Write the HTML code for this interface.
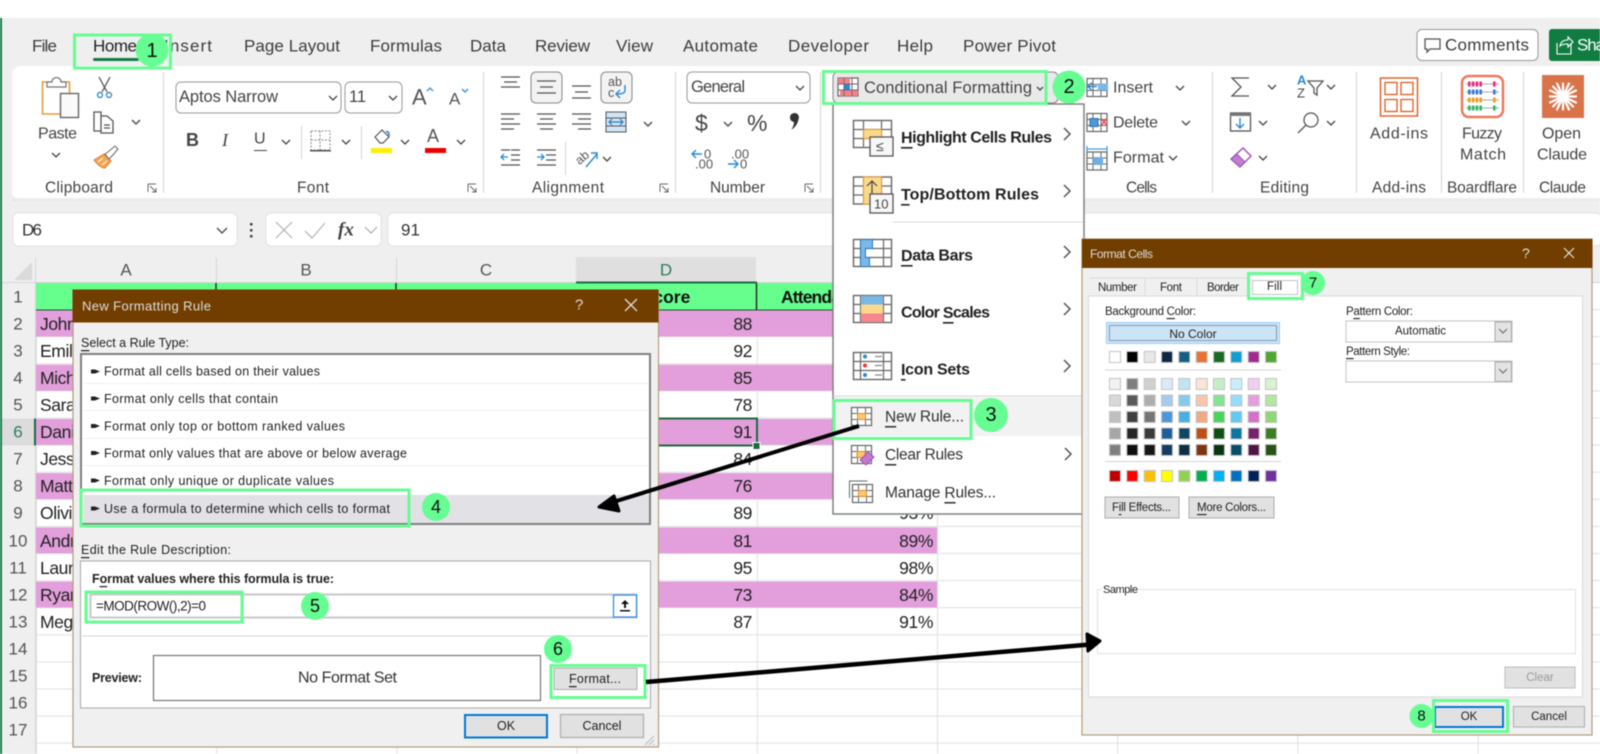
<!DOCTYPE html>
<html lang="en"><head><meta charset="utf-8"><title>Excel conditional formatting steps</title>
<style>
html,body{margin:0;padding:0;background:#fff;width:1600px;height:754px;overflow:hidden}
svg{display:block;filter:blur(.45px)}
text{font-family:"Liberation Sans",sans-serif;dominant-baseline:central;fill:#333;font-size:15px}
.tab{font-size:17px;fill:#3c3c3c}
.rb{font-size:16px;fill:#444}
.lb{font-size:15.5px;fill:#444}
.cell{font-size:17.5px;fill:#222;letter-spacing:-.4px}
.hd{font-size:17px;fill:#555;text-anchor:middle}
.dl{font-size:12.5px;fill:#222}
.dt{font-size:13px;fill:#ddd}
.mb{font-size:16px;font-weight:bold;fill:#222}
.mn{font-size:15.5px;fill:#333}
.num{font-size:20px;fill:#111;text-anchor:middle}
.u{text-decoration:underline}
.ic{fill:none;stroke:#555;stroke-width:1.3}
.chev{fill:none;stroke:#444;stroke-width:1.3}
.g{fill:none;stroke:#66fd92;stroke-width:3}
.c{fill:#66fd92}
</style></head><body>
<svg xmlns="http://www.w3.org/2000/svg" width="1600" height="754" viewBox="0 0 1600 754">
<defs>
<pattern id="grid" patternUnits="userSpaceOnUse" x="36" y="283" width="180.2" height="27.1"><rect width="181" height="28" fill="#fff"/><path d="M.5 0V28M0 26.6H181" stroke="#e0e0e0" stroke-width="1" fill="none"/></pattern>
<path id="cv" d="M-4 -2L0 2L4 -2" class="chev"/>
<path id="mc" d="M-3 -6L3 0L-3 6" fill="none" stroke="#555" stroke-width="1.5"/>
<g id="mg"><rect x="0" y="0" width="38" height="27" fill="#fff" stroke="#666" stroke-width="1.4"/><path d="M0 9H38M0 18H38M10 0V27M28 0V27" stroke="#666" stroke-width="1.2" fill="none"/></g>
<g id="mg2"><rect x="0" y="0" width="38" height="27" fill="#fff" stroke="#666" stroke-width="1.4"/><path d="M0 9H38M0 18H38M7 0V27M30 0V27" stroke="#666" stroke-width="1.2" fill="none"/></g>
<g id="sg"><rect x="0" y="0" width="20" height="18" fill="#fff" stroke="#666" stroke-width="1.2"/><path d="M0 6H20M0 12H20M6 0V18M14 0V18" stroke="#666" stroke-width="1" fill="none"/></g>
</defs>

<rect width="1600" height="754" fill="#efefef"/>
<rect width="1600" height="18" fill="#fff"/>
<rect x="0" y="18" width="2" height="736" fill="#107c41"/>

<!-- tabs -->
<text class="tab" x="32" y="46" textLength="25">File</text>
<text class="tab" x="93" y="46" textLength="44" style="fill:#222">Home</text>
<rect x="93" y="58" width="46" height="3" rx="1.5" fill="#107c41"/>
<text class="tab" x="164" y="46" textLength="48">Insert</text>
<text class="tab" x="244" y="46" textLength="96">Page Layout</text>
<text class="tab" x="370" y="46" textLength="72">Formulas</text>
<text class="tab" x="470" y="46" textLength="36">Data</text>
<text class="tab" x="535" y="46" textLength="55">Review</text>
<text class="tab" x="616" y="46" textLength="37">View</text>
<text class="tab" x="683" y="46" textLength="75">Automate</text>
<text class="tab" x="788" y="46" textLength="81">Developer</text>
<text class="tab" x="897" y="46" textLength="36">Help</text>
<text class="tab" x="963" y="46" textLength="93">Power Pivot</text>
<rect x="1417" y="29.5" width="121" height="31" rx="5" fill="#fff" stroke="#999"/>
<path d="M1425 39h15v10h-10l-3 3v-3h-2z" class="ic"/>
<text class="tab" x="1445" y="45" textLength="84">Comments</text>
<rect x="1549" y="29" width="60" height="32" rx="3" fill="#107c41"/>
<path d="M1557 43v11h14v-11M1560 46c1-5 4-6 8-6v-3l5 5-5 5v-3c-3 0-6 0-8 2z" fill="none" stroke="#fff" stroke-width="1.1"/>
<text class="tab" x="1577" y="45" textLength="28" style="fill:#fff">Sha</text>

<!-- ribbon -->
<rect x="12" y="66" width="1600" height="134" rx="9" fill="#fff"/>
<rect x="12" y="198" width="1588" height="3" fill="#e3e3e3" opacity=".6"/>
<g fill="#d4d4d4">
<rect x="163" y="72" width="1" height="121"/><rect x="483" y="72" width="1" height="121"/><rect x="675" y="72" width="1" height="121"/><rect x="820" y="72" width="1" height="121"/><rect x="1212" y="72" width="1" height="121"/><rect x="1356" y="72" width="1" height="121"/><rect x="1441" y="72" width="1" height="121"/><rect x="1523" y="72" width="1" height="121"/>
</g>
<!-- clipboard -->
<g transform="translate(0,-2)">
<path d="M42.5 84h27v32h-27z" fill="#fff" stroke="#e89a3c" stroke-width="1.6"/>
<path d="M47 84h5c0-6 9-6 9 0h5v5h-19z" fill="#fff" stroke="#777" stroke-width="1.2"/>
<rect x="60.5" y="95.5" width="18" height="24" fill="#fafafa" stroke="#666" stroke-width="1.4"/>
</g>
<text class="rb" x="38" y="134" textLength="39">Paste</text>
<use href="#cv" x="56" y="155"/>
<path d="M99 77l8 15M110 77l-8 15" class="ic"/><circle cx="100" cy="95" r="2.5" fill="none" stroke="#3b8dd0" stroke-width="1.4"/><circle cx="109" cy="95" r="2.5" fill="none" stroke="#3b8dd0" stroke-width="1.4"/>
<g transform="translate(0,-2)"><path d="M94 114h7v19h-7zM101 118h6l6 5v12h-12z" class="ic" fill="#fff"/><path d="M104 127h6M104 130h6" class="ic" stroke-width="1"/></g>
<use href="#cv" x="136" y="122"/>
<path d="M94 160l10-6 7 7-6 7c-4 0-8-4-11-8z" fill="#f3a858" stroke="#e07a20"/><path d="M98 162l5-4M102 165l5-4" stroke="#fff"/>
<path d="M105 154l3-2 7-6 3 3-6 7-3 3z" fill="#fff" stroke="#666"/>
<text class="lb" x="45" y="188" textLength="68">Clipboard</text>
<path d="M148 184v8M148 184h8M150 186l6 6M156 188v4h-4" fill="none" stroke="#666"/>
<!-- font -->
<rect x="176" y="82" width="165" height="31" rx="5" fill="#fff" stroke="#999"/>
<text x="179" y="97" textLength="99" style="font-size:16.5px;fill:#444">Aptos Narrow</text><use href="#cv" x="333" y="98"/>
<rect x="345" y="82" width="57" height="31" rx="5" fill="#fff" stroke="#999"/>
<text x="349" y="97" textLength="17" style="font-size:16.5px;fill:#444">11</text><use href="#cv" x="393" y="98"/>
<text x="412" y="97" style="font-size:22px;fill:#555">A</text><path d="M427 91l3-3 3 3" fill="none" stroke="#3b8dd0" stroke-width="1.3"/>
<text x="449" y="99" style="font-size:17px;fill:#555">A</text><path d="M462 89l3 3 3-3" fill="none" stroke="#3b8dd0" stroke-width="1.3"/>
<text x="186" y="140" style="font-size:18px;font-weight:bold;fill:#444">B</text>
<text x="222" y="140" style="font-size:18px;font-style:italic;font-family:'Liberation Serif',serif;fill:#444">I</text>
<text x="254" y="139" style="font-size:16px;fill:#444">U</text><rect x="254" y="150" width="13" height="1" fill="#444"/>
<use href="#cv" x="286" y="142"/><rect x="301" y="126" width="1" height="33" fill="#d4d4d4"/>
<g transform="translate(0,-1)"><path d="M311 132h19v19h-19z M320 132v19M311 141h19" fill="none" stroke="#888" stroke-dasharray="2 1.5"/><rect x="310" y="151" width="21" height="1.5" fill="#555"/></g>
<use href="#cv" x="346" y="142"/><rect x="361" y="126" width="1" height="33" fill="#d4d4d4"/>
<g transform="translate(0,-2)"><path d="M375 139l7-7 7 7-6 6h-3z" fill="#fff" stroke="#555" stroke-width="1.2"/><path d="M386 134c2-1 3 0 3 4" fill="none" stroke="#2a7ac0" stroke-width="1.5"/></g>
<rect x="371" y="148" width="21" height="5" fill="#ffee00"/>
<use href="#cv" x="405" y="142"/>
<text x="427" y="136" style="font-size:18px;fill:#555">A</text><rect x="425" y="148" width="21" height="5" fill="#ee0000"/>
<use href="#cv" x="461" y="142"/>
<text class="lb" x="297" y="188" textLength="32">Font</text>
<path d="M468 184v8M468 184h8M470 186l6 6M476 188v4h-4" fill="none" stroke="#666"/>
<!-- alignment -->
<path d="M501 77h19M504 82h13M501 87h19" class="ic"/>
<rect x="531" y="72" width="31" height="31" rx="5" fill="#f3f3f3" stroke="#888"/>
<path d="M537 81h19M540 87h13M537 93h19" class="ic"/>
<path d="M572 86h19M575 92h13M572 98h19" class="ic"/>
<rect x="601" y="72" width="31" height="31" rx="5" fill="#f3f3f3" stroke="#888"/>
<text x="608" y="82" style="font-size:12.5px;fill:#555">ab</text><text x="608" y="93" style="font-size:12.5px;fill:#555">c</text>
<path d="M625 85v5c0 3-2 4-9 4M620 90l-4 4 4 4" fill="none" stroke="#2a8ad0" stroke-width="1.4"/>
<path d="M501 114h19M501 119h13M501 124h19M501 129h13" class="ic"/>
<path d="M537 114h19M540 119h13M537 124h19M540 129h13" class="ic"/>
<path d="M572 114h19M578 119h13M572 124h19M578 129h13" class="ic"/>
<rect x="606" y="112" width="20" height="20" fill="#cfe5f7" stroke="#555"/><path d="M606 118h20M606 126h20" stroke="#555"/><path d="M609 122h14M612 119l-3 3 3 3M620 119l3 3-3 3" fill="none" stroke="#2a7ac0" stroke-width="1.2"/>
<use href="#cv" x="648" y="124"/>
<path d="M511 150h9M511 155h9M511 160h9M501 150h9M501 165h19" class="ic"/><path d="M508 157h-7M504 154l-3 3 3 3" fill="none" stroke="#2a8ad0" stroke-width="1.3"/>
<path d="M537 150h19M546 155h10M546 160h10M537 165h19" class="ic"/><path d="M537 157h7M541 154l3 3-3 3" fill="none" stroke="#2a8ad0" stroke-width="1.3"/>
<rect x="565" y="142" width="1" height="33" fill="#d4d4d4"/>
<text x="575" y="157" transform="rotate(-40 583 157)" style="font-size:12.5px;fill:#555">ab</text><path d="M586 167l11-13M591 153h6v6" fill="none" stroke="#2a8ad0" stroke-width="1.4"/>
<use href="#cv" x="607" y="159"/>
<text class="lb" x="532" y="188" textLength="72">Alignment</text>
<path d="M660 184v8M660 184h8M662 186l6 6M668 188v4h-4" fill="none" stroke="#666"/>
<!-- number -->
<rect x="687" y="72" width="123" height="31" rx="5" fill="#fff" stroke="#999"/>
<text x="691" y="87" textLength="54" style="font-size:16.5px;fill:#444">General</text><use href="#cv" x="800" y="88"/>
<text x="695" y="123" style="font-size:23px;fill:#444">$</text><use href="#cv" x="728" y="124"/>
<text x="747" y="123" style="font-size:23px;fill:#444">%</text>
<path d="M790 117a4.5 4.5 0 1 1 8.500 2.500c-1 4-3 8-7 10c1.500-2.500 2.500-5 2.500-7.500a4.500 4.500 0 0 1-4-5z" fill="#333"/>
<path d="M702 154h-10M696 150l-4 4 4 4" fill="none" stroke="#2a8ad0" stroke-width="1.4"/><text x="704" y="154" style="font-size:13px;fill:#555">0</text><text x="695" y="164" style="font-size:13px;fill:#555">.00</text>
<text x="731" y="154" style="font-size:13px;fill:#555">.00</text><path d="M728 164h10M734 160l4 4-4 4" fill="none" stroke="#2a8ad0" stroke-width="1.4"/><text x="740" y="164" style="font-size:13px;fill:#555">0</text>
<text class="lb" x="710" y="188" textLength="55">Number</text>
<path d="M805 184v8M805 184h8M807 186l6 6M813 188v4h-4" fill="none" stroke="#666"/>
<!-- conditional button -->
<rect x="833" y="72" width="225" height="31" rx="5" fill="#e9e9e9" stroke="#888"/>
<use href="#sg" x="838" y="78"/>
<path d="M838 78h12v6h-12zM840 90h18v6h-18z" fill="#f4808c"/><rect x="844" y="84" width="6" height="6" fill="#2a8ad0"/>
<path d="M838 84h20M838 90h20M844 78v18M852 78v18" stroke="#666" stroke-width=".8"/>
<text x="864" y="88" textLength="168" style="font-size:16.5px;fill:#444">Conditional Formatting</text>
<path d="M1037 87l3 3 3-3" class="chev"/>
<!-- cells -->
<g transform="translate(0,-2.5)"><use href="#sg" x="1087" y="81"/><rect x="1098" y="86" width="10" height="7" fill="#7ab8e8"/><path d="M1097 89h-9M1092 85l-4 4 4 4" fill="none" stroke="#2a8ad0" stroke-width="1.4"/></g>
<text class="rb" x="1113" y="88" textLength="40">Insert</text><use href="#cv" x="1180" y="88"/>
<g transform="translate(0,-4.5)"><use href="#sg" x="1087" y="118"/><rect x="1090" y="123" width="8" height="8" fill="#4f98d8" stroke="#2a70b0"/><path d="M1101 123l6 7M1107 123l-6 7" stroke="#e84848" stroke-width="1.4"/></g>
<text class="rb" x="1113" y="123" textLength="45">Delete</text><use href="#cv" x="1186" y="123"/>
<g transform="translate(0,-3)"><use href="#sg" x="1087" y="155"/><rect x="1093" y="160" width="10" height="8" fill="#6fb0e4"/><path d="M1087 152h20M1087 149v6M1107 149v6" stroke="#2a8ad0" fill="none"/></g>
<text class="rb" x="1113" y="158" textLength="51">Format</text><use href="#cv" x="1173" y="158"/>
<text class="lb" x="1126" y="188" textLength="31">Cells</text>
<!-- editing -->
<path d="M1249 78h-17l9 9-9 9h17" class="ic" stroke-width="1.5"/><use href="#cv" x="1272" y="87"/>
<text x="1297" y="80" style="font-size:13px;font-weight:bold;fill:#2a8ad0">A</text><text x="1297" y="93" style="font-size:13px;fill:#444">Z</text>
<path d="M1308 81h15l-6 7v7l-3-2v-5z" class="ic"/><use href="#cv" x="1331" y="87"/>
<g transform="translate(0,-4)"><rect x="1230.5" y="117" width="20" height="18" fill="#fff" stroke="#555" stroke-width="1.3"/><rect x="1230" y="117" width="21" height="3" fill="#777"/>
<path d="M1240 122v10M1236 128l4 4 4-4" fill="none" stroke="#2a8ad0" stroke-width="1.4"/></g><use href="#cv" x="1263" y="123"/>
<circle cx="1311" cy="120" r="7" class="ic" stroke-width="1.4"/><path d="M1306 125l-8 8" class="ic" stroke-width="1.5"/><use href="#cv" x="1331" y="123"/>
<g transform="translate(0,-4)"><path d="M1231 163l12-11 8 8-11 11z" fill="#fff" stroke="#a04fb8" stroke-width="1.4"/><path d="M1231 163l6-5 8 8-5 5z" fill="#c080d0" stroke="#a04fb8"/></g>
<use href="#cv" x="1263" y="158"/>
<text class="lb" x="1260" y="188" textLength="49">Editing</text>
<!-- addins -->
<g transform="translate(0,-2.5)"><rect x="1380.5" y="80.5" width="37" height="38" fill="none" stroke="#e05a20" stroke-width="1.4"/>
<g fill="none" stroke="#e05a20" stroke-width="1.3"><rect x="1385" y="85" width="12" height="12"/><rect x="1401" y="85" width="12" height="12"/><rect x="1385" y="102" width="12" height="12"/><rect x="1401" y="102" width="12" height="12"/></g></g>
<text class="rb" x="1370" y="134" textLength="58">Add-ins</text>
<text class="lb" x="1372" y="188" textLength="54">Add-ins</text>
<g transform="translate(0,-3)"><rect x="1462" y="79" width="41" height="41" rx="7" fill="#fff" stroke="#f0785a" stroke-width="2.5"/>
<g stroke="#aaa"><path d="M1466 87h33M1466 95h33M1466 103h33M1466 111h33"/></g>
<g stroke-width="5" stroke-dasharray="2.6 1.2"><path d="M1468 87h15M1493 87h4" stroke="#e82a7a"/><path d="M1468 95h15M1493 95h4" stroke="#3a78d8"/><path d="M1468 103h15M1493 103h4" stroke="#f0a020"/><path d="M1468 111h15M1493 111h4" stroke="#30b868"/></g></g>
<text class="rb" x="1462" y="134" textLength="40">Fuzzy</text><text class="rb" x="1460" y="155" textLength="46">Match</text>
<text class="lb" x="1447" y="188" textLength="70">Boardflare</text>
<rect x="1542" y="75" width="42" height="43" fill="#d9734a"/>
<g transform="translate(0,-3.5)"><g stroke="#fff" stroke-width="2.2" stroke-linecap="round"><path d="M1563 87v26M1550 100h26M1553 90l20 20M1573 90l-20 20M1557 87l12 26M1569 87l-12 26M1550 94l26 12M1576 94l-26 12"/></g>
<circle cx="1563" cy="100" r="3" fill="#fff"/></g>
<text class="rb" x="1542" y="134" textLength="39">Open</text><text class="rb" x="1537" y="155" textLength="50">Claude</text>
<text class="lb" x="1539" y="188" textLength="47">Claude</text>

<!-- formula bar -->
<rect x="13" y="213" width="224" height="33" rx="5" fill="#fff" stroke="#e3e3e3"/>
<text x="22" y="230" textLength="20" style="font-size:17px;fill:#333">D6</text>
<path d="M217 228l5 5 5-5" class="chev" stroke-width="1.6"/>
<g fill="#444"><rect x="250" y="223" width="2.5" height="2.5"/><rect x="250" y="229" width="2.5" height="2.5"/><rect x="250" y="235" width="2.5" height="2.5"/></g>
<rect x="266" y="213" width="115" height="33" rx="5" fill="#fff" stroke="#e3e3e3"/>
<path d="M276 222l16 16M292 222l-16 16M305 231l7 7 13-15" fill="none" stroke="#bbb" stroke-width="1.3"/>
<text x="338" y="230" style="font-size:19px;font-style:italic;font-weight:bold;font-family:'Liberation Serif',serif;fill:#444">fx</text>
<path d="M365 227l6 6 6-6" fill="none" stroke="#aaa" stroke-width="1.2"/>
<rect x="388" y="213" width="1213" height="33" rx="5" fill="#fff" stroke="#e3e3e3"/>
<text x="401" y="230" textLength="19" style="font-size:17px;fill:#333">91</text>

<!-- sheet -->
<rect x="0" y="250" width="1600" height="504" fill="#efefef"/>
<rect x="0" y="18" width="2" height="736" fill="#107c41"/>
<rect x="36" y="283" width="1564" height="471" fill="url(#grid)"/>
<path d="M32 262v18h-18z" fill="#dadada"/>
<rect x="576" y="257" width="180" height="26" fill="#dfdfdf"/>
<g fill="#d5d5d5"><rect x="216" y="258" width="1" height="25"/><rect x="396" y="258" width="1" height="25"/><rect x="936" y="258" width="1" height="25"/><rect x="1116" y="258" width="1" height="25"/><rect x="2" y="282" width="1598" height="1"/><rect x="35" y="258" width="1" height="496"/></g>
<text class="hd" x="126" y="270">A</text><text class="hd" x="306" y="270">B</text><text class="hd" x="486" y="270">C</text><text class="hd" x="666" y="270" style="fill:#2f7c5c">D</text><text class="hd" x="846" y="270">E</text>
<!-- header row -->
<rect x="36" y="283" width="901" height="27" fill="#66ff8e"/>
<rect x="36" y="309.5" width="901" height="1.2" fill="#2a4a30"/>
<path d="M216 283v27M396 283v27M756.5 283v27M937 283v27" stroke="#222" stroke-width="1.4"/>
<rect x="576" y="281.500" width="181" height="2" fill="#1c6b40"/>
<text x="666" y="297" style="font-size:17.5px;font-weight:bold;fill:#111;text-anchor:middle">Score</text>
<text x="781" y="297" textLength="126" style="font-size:17.5px;font-weight:bold;fill:#111">Attendance Rate</text>
<!-- pink -->
<g fill="#e29fdb">
<rect x="36" y="310.5" width="901" height="26"/><rect x="36" y="364.7" width="901" height="26"/><rect x="36" y="418.9" width="901" height="26"/><rect x="36" y="473.1" width="901" height="26"/><rect x="36" y="527.3" width="901" height="26"/><rect x="36" y="581.5" width="901" height="26"/>
</g>
<!-- row headers -->
<rect x="2" y="418.5" width="33" height="27" fill="#dcdcdc"/>
<rect x="34" y="418.5" width="2" height="27" fill="#1c6b40"/>
<text class="hd" x="18" y="297">1</text><text class="hd" x="18" y="324">2</text><text class="hd" x="18" y="351">3</text><text class="hd" x="18" y="378">4</text><text class="hd" x="18" y="405">5</text><text class="hd" x="18" y="432" style="fill:#2f7c5c">6</text><text class="hd" x="18" y="459">7</text><text class="hd" x="18" y="486">8</text><text class="hd" x="18" y="513">9</text><text class="hd" x="18" y="541">10</text><text class="hd" x="18" y="568">11</text><text class="hd" x="18" y="595">12</text><text class="hd" x="18" y="622">13</text><text class="hd" x="18" y="649">14</text><text class="hd" x="18" y="676">15</text><text class="hd" x="18" y="703">16</text><text class="hd" x="18" y="730">17</text>
<!-- names -->
<text class="cell" x="40" y="324">John Smith</text><text class="cell" x="40" y="351">Emily Davis</text><text class="cell" x="40" y="378">Michael Brown</text><text class="cell" x="40" y="405">Sarah Wilson</text><text class="cell" x="40" y="432">Daniel Lee</text><text class="cell" x="40" y="459">Jessica Taylor</text><text class="cell" x="40" y="486">Matthew Clark</text><text class="cell" x="40" y="513">Olivia Harris</text><text class="cell" x="40" y="541">Andrew Lewis</text><text class="cell" x="40" y="568">Lauren Walker</text><text class="cell" x="40" y="595">Ryan Hall</text><text class="cell" x="40" y="622">Megan Young</text>
<!-- values -->
<text class="cell" x="752" y="324" text-anchor="end">88</text><text class="cell" x="752" y="351" text-anchor="end">92</text><text class="cell" x="752" y="378" text-anchor="end">85</text><text class="cell" x="752" y="405" text-anchor="end">78</text><text class="cell" x="752" y="432" text-anchor="end">91</text><text class="cell" x="752" y="459" text-anchor="end">84</text><text class="cell" x="752" y="486" text-anchor="end">76</text><text class="cell" x="752" y="513" text-anchor="end">89</text><text class="cell" x="752" y="541" text-anchor="end">81</text><text class="cell" x="752" y="568" text-anchor="end">95</text><text class="cell" x="752" y="595" text-anchor="end">73</text><text class="cell" x="752" y="622" text-anchor="end">87</text>
<text class="cell" x="933" y="324" text-anchor="end">95%</text><text class="cell" x="933" y="351" text-anchor="end">97%</text><text class="cell" x="933" y="378" text-anchor="end">90%</text><text class="cell" x="933" y="405" text-anchor="end">88%</text><text class="cell" x="933" y="432" text-anchor="end">96%</text><text class="cell" x="933" y="459" text-anchor="end">92%</text><text class="cell" x="933" y="486" text-anchor="end">85%</text><text class="cell" x="933" y="513" text-anchor="end">93%</text><text class="cell" x="933" y="541" text-anchor="end">89%</text><text class="cell" x="933" y="568" text-anchor="end">98%</text><text class="cell" x="933" y="595" text-anchor="end">84%</text><text class="cell" x="933" y="622" text-anchor="end">91%</text>
<rect x="576" y="418.5" width="181" height="27" fill="none" stroke="#1c6b40" stroke-width="2"/>
<rect x="753" y="442.5" width="7" height="7" fill="#1c6b40" stroke="#fff"/>

<!-- dialog 1 -->
<rect x="73" y="290" width="585.5" height="457" fill="#f0f0f0" stroke="#b39a7c" stroke-width="1.2"/>
<rect x="72.5" y="289.5" width="586" height="33" fill="#723e00"/>
<text class="dt" x="82" y="306" textLength="129">New Formatting Rule</text>
<text x="575" y="305" style="font-size:15px;fill:#ddd">?</text>
<path d="M625 299l12 12M637 299l-12 12" stroke="#ddd" stroke-width="1.3"/>
<text class="dl" x="81" y="343" textLength="108"><tspan class="u">S</tspan>elect a Rule Type:</text>
<rect x="81" y="354" width="569" height="170" fill="#fff" stroke="#808080" stroke-width="2"/>
<path d="M83 383.5H648M83 410.5H648M83 438.5H648M83 465.5H648" stroke="#f0f0f0"/>
<rect x="83" y="495" width="566" height="28" fill="#e1e1e6"/>
<g fill="#222"><path d="M91 369.5h4l5 2-5 2h-4zM91 396.5h4l5 2-5 2h-4zM91 424h4l5 2-5 2h-4zM91 451h4l5 2-5 2h-4zM91 478.5h4l5 2-5 2h-4zM91 506.5h4l5 2-5 2h-4z"/></g>
<text class="dl" x="104" y="371.5" textLength="216">Format all cells based on their values</text>
<text class="dl" x="104" y="399" textLength="174">Format only cells that contain</text>
<text class="dl" x="104" y="426.3" textLength="241">Format only top or bottom ranked values</text>
<text class="dl" x="104" y="453.7" textLength="303">Format only values that are above or below average</text>
<text class="dl" x="104" y="481" textLength="230">Format only unique or duplicate values</text>
<text class="dl" x="104" y="509" textLength="286">Use a formula to determine which cells to format</text>
<text class="dl" x="81" y="550" textLength="150"><tspan class="u">E</tspan>dit the Rule Description:</text>
<rect x="80.5" y="561" width="570" height="147" fill="#fff" stroke="#a8a8a8"/>
<text class="dl" x="92" y="579" textLength="242" style="font-weight:bold">F<tspan class="u">o</tspan>rmat values where this formula is true:</text>
<rect x="90.5" y="594.5" width="546" height="23" fill="#fff" stroke="#c8c8c8" stroke-width="2"/>
<text x="96" y="606" textLength="110" style="font-size:13.5px;fill:#222">=MOD(ROW(),2)=0</text>
<rect x="613.5" y="595" width="23" height="22" fill="#fff" stroke="#3a8ee0" stroke-width="1.3"/>
<path d="M625 600l-4 4h3v4h2v-4h3zM620 610h10v1.5h-10z" fill="#111"/>
<path d="M82 636H648" stroke="#d4d4d4"/>
<text class="dl" x="92" y="678" textLength="50" style="font-weight:bold">Preview:</text>
<rect x="153.5" y="655.5" width="387" height="45" fill="#fff" stroke="#777" stroke-width="1.2"/>
<text x="298" y="678" textLength="99" style="font-size:16px;fill:#333">No Format Set</text>
<rect x="554" y="668" width="83" height="21.5" fill="#e1e1e1" stroke="#adadad"/>
<text class="dl" x="569" y="679" textLength="52"><tspan class="u">F</tspan>ormat...</text>
<rect x="465" y="715" width="82" height="22.5" fill="#e1e1e1" stroke="#0078d7" stroke-width="2"/>
<text class="dl" x="506" y="726" style="text-anchor:middle">OK</text>
<rect x="560.5" y="714.5" width="83" height="23" fill="#e1e1e1" stroke="#adadad" stroke-width="1.2"/>
<text class="dl" x="602" y="726" style="text-anchor:middle">Cancel</text>
<path d="M654 736l-9 9M654 740l-5 5M654 744l-1 1" stroke="#bbb"/>
<!-- dialog1 annotations -->
<rect class="g" x="81" y="490" width="328" height="36"/>
<circle class="c" cx="436" cy="507" r="14"/><text class="num" x="436" y="507" style="font-size:18px">4</text>
<rect class="g" x="86" y="592" width="156" height="30"/>
<circle class="c" cx="315" cy="606" r="14"/><text class="num" x="315" y="606" style="font-size:18px">5</text>
<rect class="g" x="551" y="665.5" width="94" height="32"/>
<circle class="c" cx="558" cy="649" r="14"/><text class="num" x="558" y="649" style="font-size:18px">6</text>

<!-- menu -->
<rect x="833" y="104" width="251" height="410" fill="#fff" stroke="#808080" stroke-width="1.5"/>
<use href="#mg" x="853.5" y="120.5"/><rect x="863.5" y="129.500" width="18" height="9" fill="#fbd98c" stroke="#e8962c"/>
<rect x="870" y="137" width="23" height="19" fill="#f7f7f7" stroke="#555" stroke-width="1.3"/><text x="876" y="146" style="font-size:14px;fill:#444">≤</text>
<text class="mb" x="901" y="138" textLength="151"><tspan class="u">H</tspan>ighlight Cells Rules</text>
<use href="#mc" x="1067" y="134"/>
<use href="#mg" x="853.5" y="177"/><rect x="863.5" y="177" width="18" height="27" fill="#fbd98c" stroke="#e8962c"/>
<path d="M872 198v-17M867 186l5-5 5 5" fill="none" stroke="#444" stroke-width="1.2"/>
<rect x="870" y="194" width="23" height="19" fill="#f7f7f7" stroke="#555" stroke-width="1.3"/><text x="874" y="204" style="font-size:13px;fill:#444">10</text>
<text class="mb" x="901" y="195" textLength="138"><tspan class="u">T</tspan>op/Bottom Rules</text>
<use href="#mc" x="1067" y="191"/>
<path d="M893 222H1083" stroke="#d9d9d9"/>
<use href="#mg2" x="853.5" y="239.5"/><path d="M860.5 239.5h12v9h-7v9h4v9h-9z" fill="#7ab8e8" stroke="#2a7ac0"/>
<text class="mb" x="901" y="256" textLength="72"><tspan class="u">D</tspan>ata Bars</text>
<use href="#mc" x="1067" y="252"/>
<use href="#mg2" x="853.5" y="295.500"/><rect x="860.5" y="295.5" width="23" height="9" fill="#7ab8e8"/><rect x="860.5" y="304.5" width="23" height="9" fill="#fbd98c"/><rect x="860.5" y="313.5" width="23" height="9" fill="#f7878f"/>
<path d="M860.5 295.5h23v27h-23z" fill="none" stroke="#777"/>
<text class="mb" x="901" y="313" textLength="89">Color <tspan class="u">S</tspan>cales</text>
<use href="#mc" x="1067" y="309"/>
<use href="#mg2" x="853.5" y="352.5"/><circle cx="865" cy="356.500" r="2" fill="#2a8ad0"/><circle cx="865" cy="365.500" r="2" fill="#ee3838"/><circle cx="865" cy="375" r="2" fill="#2a8ad0"/>
<path d="M875 356.5h7M875 365.5h7M875 375h7" stroke="#888" stroke-width="1.2"/>
<text class="mb" x="901" y="370" textLength="69"><tspan class="u">I</tspan>con Sets</text>
<use href="#mc" x="1067" y="366"/>
<path d="M833 396H1083" stroke="#d4d4d4"/>
<rect x="834" y="397" width="248" height="39" fill="#f2f2f2"/>
<use href="#sg" x="851.5" y="407.5"/><rect x="857.5" y="413.5" width="8" height="6" fill="#fbc970" stroke="#e8862c"/>
<text class="mn" x="885" y="417" textLength="79"><tspan class="u">N</tspan>ew Rule...</text>
<use href="#sg" x="851.5" y="445.5"/><rect x="857" y="451.5" width="8" height="6" fill="#fbc970" stroke="#e8862c"/>
<path d="M860 460l8-8 6 5-8 8z" fill="#c078d0" stroke="#a04fb8"/>
<text class="mn" x="885" y="455" textLength="78"><tspan class="u">C</tspan>lear Rules</text>
<use href="#mc" x="1068" y="454"/>
<use href="#sg" x="852.5" y="484.5"/><path d="M849.500 498v-17h18" fill="none" stroke="#666"/><rect x="858.5" y="490.5" width="8" height="6" fill="#fbc970" stroke="#e8862c"/>
<text class="mn" x="885" y="493" textLength="111">Manage <tspan class="u">R</tspan>ules...</text>

<!-- dialog 2 -->
<rect x="1082" y="239" width="510" height="496" fill="#f0f0f0" stroke="#b39a7c" stroke-width="1.2"/>
<rect x="1082" y="239" width="510.5" height="29" fill="#723e00"/>
<text class="dt" x="1090" y="254" textLength="63" style="font-size:12px">Format Cells</text>
<text x="1522" y="253" style="font-size:14px;fill:#ddd">?</text>
<path d="M1564 248l10 10M1574 248l-10 10" stroke="#ddd" stroke-width="1.2"/>
<rect x="1088.5" y="296" width="494" height="401" fill="#fff" stroke="#d9d9d9"/>
<path d="M1090 278h55v18M1145 278h52v18M1197 278h53v18" fill="none" stroke="#dcdcdc"/>
<rect x="1250" y="276" width="50" height="21" fill="#fff"/>
<rect x="1252.5" y="280.5" width="45" height="14" fill="none" stroke="#888" stroke-dasharray="1 1"/>
<text class="dl" x="1098" y="288" textLength="39" style="font-size:11.5px">Number</text>
<text class="dl" x="1160" y="288" textLength="22" style="font-size:11.5px">Font</text>
<text class="dl" x="1207" y="288" textLength="32" style="font-size:11.5px">Border</text>
<text class="dl" x="1267" y="287" textLength="15" style="font-size:11.5px">Fill</text>
<text class="dl" x="1105" y="312" textLength="91" style="font-size:11.5px">Background <tspan class="u">C</tspan>olor:</text>
<rect x="1106.5" y="322.5" width="173" height="21" fill="#cce4f7" stroke="#99d1ff"/>
<rect x="1109.5" y="325.5" width="167" height="15" fill="none" stroke="#8a9aa8"/>
<text class="dl" x="1193" y="334" style="text-anchor:middle;font-size:12px">No Color</text>
<g stroke="#c4c4c4" stroke-width="1">
<rect x="1109.5" y="351.5" width="11" height="11" fill="#ffffff"/><rect x="1126.8" y="351.5" width="11" height="11" fill="#000000"/><rect x="1144.2" y="351.5" width="11" height="11" fill="#e8e8e8"/><rect x="1161.5" y="351.5" width="11" height="11" fill="#0e2841"/><rect x="1178.8" y="351.5" width="11" height="11" fill="#156082"/><rect x="1196.2" y="351.5" width="11" height="11" fill="#e97132"/><rect x="1213.5" y="351.5" width="11" height="11" fill="#196b24"/><rect x="1230.8" y="351.5" width="11" height="11" fill="#0f9ed5"/><rect x="1248.2" y="351.5" width="11" height="11" fill="#a02b93"/><rect x="1265.5" y="351.5" width="11" height="11" fill="#4ea72e"/>
<rect x="1109.5" y="378.5" width="11" height="11" fill="#f2f2f2"/><rect x="1126.8" y="378.5" width="11" height="11" fill="#7f7f7f"/><rect x="1144.2" y="378.5" width="11" height="11" fill="#d0d0d0"/><rect x="1161.5" y="378.5" width="11" height="11" fill="#dceaf7"/><rect x="1178.8" y="378.5" width="11" height="11" fill="#c1e4f5"/><rect x="1196.2" y="378.5" width="11" height="11" fill="#fbe3d6"/><rect x="1213.5" y="378.5" width="11" height="11" fill="#c1f0c8"/><rect x="1230.8" y="378.5" width="11" height="11" fill="#caedfb"/><rect x="1248.2" y="378.5" width="11" height="11" fill="#f2cfee"/><rect x="1265.5" y="378.5" width="11" height="11" fill="#d9f2d0"/>
<rect x="1109.5" y="395" width="11" height="11" fill="#d9d9d9"/><rect x="1126.8" y="395" width="11" height="11" fill="#595959"/><rect x="1144.2" y="395" width="11" height="11" fill="#aeaeae"/><rect x="1161.5" y="395" width="11" height="11" fill="#a6caec"/><rect x="1178.8" y="395" width="11" height="11" fill="#83cbeb"/><rect x="1196.2" y="395" width="11" height="11" fill="#f6c6ad"/><rect x="1213.5" y="395" width="11" height="11" fill="#84e291"/><rect x="1230.8" y="395" width="11" height="11" fill="#95dcf7"/><rect x="1248.2" y="395" width="11" height="11" fill="#e59edd"/><rect x="1265.5" y="395" width="11" height="11" fill="#b4e5a2"/>
<rect x="1109.5" y="411.5" width="11" height="11" fill="#bfbfbf"/><rect x="1126.8" y="411.5" width="11" height="11" fill="#404040"/><rect x="1144.2" y="411.5" width="11" height="11" fill="#757575"/><rect x="1161.5" y="411.5" width="11" height="11" fill="#4e95d9"/><rect x="1178.8" y="411.5" width="11" height="11" fill="#45b0e1"/><rect x="1196.2" y="411.5" width="11" height="11" fill="#f1a983"/><rect x="1213.5" y="411.5" width="11" height="11" fill="#47d459"/><rect x="1230.8" y="411.5" width="11" height="11" fill="#60caf3"/><rect x="1248.2" y="411.5" width="11" height="11" fill="#d86dcd"/><rect x="1265.5" y="411.5" width="11" height="11" fill="#8ed973"/>
<rect x="1109.5" y="428" width="11" height="11" fill="#a6a6a6"/><rect x="1126.8" y="428" width="11" height="11" fill="#262626"/><rect x="1144.2" y="428" width="11" height="11" fill="#3a3a3a"/><rect x="1161.5" y="428" width="11" height="11" fill="#215f9a"/><rect x="1178.8" y="428" width="11" height="11" fill="#0f4761"/><rect x="1196.2" y="428" width="11" height="11" fill="#c04f15"/><rect x="1213.5" y="428" width="11" height="11" fill="#0e4f16"/><rect x="1230.8" y="428" width="11" height="11" fill="#0b76a0"/><rect x="1248.2" y="428" width="11" height="11" fill="#78206e"/><rect x="1265.5" y="428" width="11" height="11" fill="#3b7d23"/>
<rect x="1109.5" y="444.5" width="11" height="11" fill="#7f7f7f"/><rect x="1126.8" y="444.5" width="11" height="11" fill="#0d0d0d"/><rect x="1144.2" y="444.5" width="11" height="11" fill="#171717"/><rect x="1161.5" y="444.5" width="11" height="11" fill="#153d64"/><rect x="1178.8" y="444.5" width="11" height="11" fill="#0a2f41"/><rect x="1196.2" y="444.5" width="11" height="11" fill="#80340e"/><rect x="1213.5" y="444.5" width="11" height="11" fill="#0a3510"/><rect x="1230.8" y="444.5" width="11" height="11" fill="#074f69"/><rect x="1248.2" y="444.5" width="11" height="11" fill="#4f1549"/><rect x="1265.5" y="444.5" width="11" height="11" fill="#275317"/>
<rect x="1109.5" y="470.5" width="11" height="11" fill="#c00000"/><rect x="1126.8" y="470.5" width="11" height="11" fill="#ff0000"/><rect x="1144.2" y="470.5" width="11" height="11" fill="#ffc000"/><rect x="1161.5" y="470.5" width="11" height="11" fill="#ffff00"/><rect x="1178.8" y="470.5" width="11" height="11" fill="#92d050"/><rect x="1196.2" y="470.5" width="11" height="11" fill="#00b050"/><rect x="1213.5" y="470.5" width="11" height="11" fill="#00b0f0"/><rect x="1230.8" y="470.5" width="11" height="11" fill="#0070c0"/><rect x="1248.2" y="470.5" width="11" height="11" fill="#002060"/><rect x="1265.5" y="470.5" width="11" height="11" fill="#7030a0"/>
</g>
<path d="M1105 370H1281M1105 461.5H1281" stroke="#d4d4d4"/>
<rect x="1105" y="497" width="74" height="21" fill="#e1e1e1" stroke="#adadad"/>
<text class="dl" x="1112" y="508" textLength="59" style="font-size:11.5px">F<tspan class="u">i</tspan>ll Effects...</text>
<rect x="1189" y="497" width="85" height="21" fill="#e1e1e1" stroke="#adadad"/>
<text class="dl" x="1197" y="508" textLength="69" style="font-size:11.5px"><tspan class="u">M</tspan>ore Colors...</text>
<text class="dl" x="1346" y="312" textLength="67" style="font-size:11.5px">P<tspan class="u">a</tspan>ttern Color:</text>
<rect x="1346" y="321" width="166" height="21" fill="#fff" stroke="#c4c4c4"/>
<rect x="1495" y="322" width="16.5" height="19.5" fill="#e3e3e3" stroke="#a8a8a8"/><path d="M1499 329l4 4 4-4" fill="none" stroke="#666"/>
<text class="dl" x="1395" y="331.5" textLength="51" style="font-size:11.5px">Automatic</text>
<text class="dl" x="1346" y="352" textLength="64" style="font-size:11.5px"><tspan class="u">P</tspan>attern Style:</text>
<rect x="1346" y="361" width="166" height="21" fill="#fff" stroke="#c4c4c4"/>
<rect x="1495" y="362" width="16.5" height="19.5" fill="#e3e3e3" stroke="#a8a8a8"/><path d="M1499 369l4 4 4-4" fill="none" stroke="#666"/>
<rect x="1097.5" y="589.5" width="478" height="64" fill="#fff" stroke="#e0e0e0"/>
<rect x="1102" y="585" width="36" height="9" fill="#fff"/>
<text class="dl" x="1103" y="590" textLength="35" style="font-size:11px">Sample</text>
<rect x="1505" y="667" width="70" height="21" fill="#e1e1e1" stroke="#bdbdbd"/>
<text class="dl" x="1540" y="678" style="text-anchor:middle;font-size:11.5px;fill:#9a9a9a">Clear</text>
<rect x="1435" y="707" width="68" height="20" fill="#e1e1e1" stroke="#0078d7" stroke-width="2"/>
<text class="dl" x="1469" y="717" style="text-anchor:middle;font-size:11.5px">OK</text>
<rect x="1513.5" y="706.5" width="71" height="20.5" fill="#e1e1e1" stroke="#adadad"/>
<text class="dl" x="1549" y="717" style="text-anchor:middle;font-size:11.5px">Cancel</text>
<rect class="g" x="1248.5" y="273.5" width="54" height="25"/>
<circle class="c" cx="1313" cy="283" r="12"/><text class="num" x="1313" y="283" style="font-size:15px">7</text>
<rect class="g" x="1433.5" y="700.5" width="74" height="31"/>
<circle class="c" cx="1421.5" cy="716" r="12"/><text class="num" x="1421.5" y="716" style="font-size:15px">8</text>

<!-- top annotations -->
<rect class="g" x="74.5" y="35" width="96" height="33"/>
<circle class="c" cx="152" cy="50" r="16.5"/><text class="num" x="152" y="51">1</text>
<rect class="g" x="823.5" y="71.5" width="222.5" height="32"/>
<circle class="c" cx="1069" cy="87" r="16.5"/><text class="num" x="1069" y="87">2</text>
<rect class="g" x="834" y="400.5" width="137" height="38"/>
<circle class="c" cx="991" cy="415" r="17"/><text class="num" x="991" y="415">3</text>

<!-- arrows -->
<path d="M859 426L610 503" stroke="#000" stroke-width="4"/>
<path d="M599 507L614 496L619 511Z" fill="#000" stroke="#000" stroke-width="3" stroke-linejoin="round"/>
<path d="M646 682L1090 644.500" stroke="#000" stroke-width="4.5"/>
<path d="M1100 641L1087 634L1088 651Z" fill="#000" stroke="#000" stroke-width="3" stroke-linejoin="round"/>
</svg>
</body></html>
